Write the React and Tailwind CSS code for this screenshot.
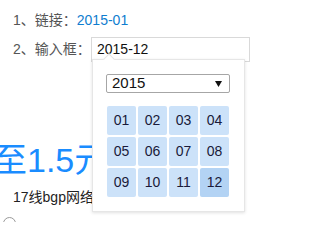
import React from "react";

const months = ["01", "02", "03", "04", "05", "06", "07", "08", "09", "10", "11", "12"];

export default function App() {
  const font = { fontFamily: '"Liberation Sans", "Noto Sans CJK SC", sans-serif' };
  return (
    <div className="w-[256px] h-[222px] overflow-hidden bg-white relative" style={font}>
      <div className="pl-[13px] pt-[10px]">
        {/* line 1 */}
        <div className="text-[14px] leading-[20px] text-[#555]">
          1、链接：<span className="text-[#0f7dcf]">2015-01</span>
        </div>

        {/* line 2 */}
        <div className="relative mt-[7px] flex items-center text-[14px] text-[#555]">
          <span className="w-[78px]">2、输入框：</span>
          <div className="w-[159px] h-[25px] border border-[#d9d9d9] pl-[5px] flex items-center text-[#111]">
            2015-12
          </div>

          {/* month picker popup */}
          <div className="absolute left-[79px] top-[22px] w-[153px] h-[153px] bg-white border border-[#e6e6e6] shadow-[0_1px_3px_rgba(0,0,0,0.12)] z-10 pl-[13px] pt-[14px]">
            <span className="absolute -top-[5px] left-[12px] w-[8px] h-[8px] rotate-45 bg-white border-l border-t border-[#e6e6e6]" />
            <div className="w-[124px] h-[19px] border border-[#a6a6a6] rounded-[2px] flex items-center justify-between pl-[5px] pr-[7px] text-[15px] text-[#111]">
              <span>2015</span>
              <svg width="7" height="6" viewBox="0 0 7 6">
                <path d="M0 0 H7 L3.5 6 Z" fill="#111" />
              </svg>
            </div>
            <div className="mt-[13px] ml-[1px] grid grid-cols-[repeat(4,29px)] auto-rows-[29px] gap-x-[2px] gap-y-[2px]">
              {months.map((m) => (
                <div
                  key={m}
                  className={`rounded-[2px] flex items-center justify-center text-[14px] text-[#1a1a3a] ${
                    m === "12" ? "bg-[#b3d3f4]" : "bg-[#cce2f9]"
                  }`}
                >
                  {m}
                </div>
              ))}
            </div>
          </div>
        </div>
      </div>

      {/* big price text */}
      <div className="mt-[78px] -ml-[7px] text-[34px] leading-[40px] text-[#1a8cff] whitespace-nowrap">
        至1.5元起
      </div>

      <div className="mt-[7px] pl-[13px] text-[14px] leading-[20px] text-[#222]">17线bgp网络</div>

      <div className="mt-[10px] ml-[3px] w-[13px] h-[13px] rounded-full border border-[#999]" />
    </div>
  );
}
